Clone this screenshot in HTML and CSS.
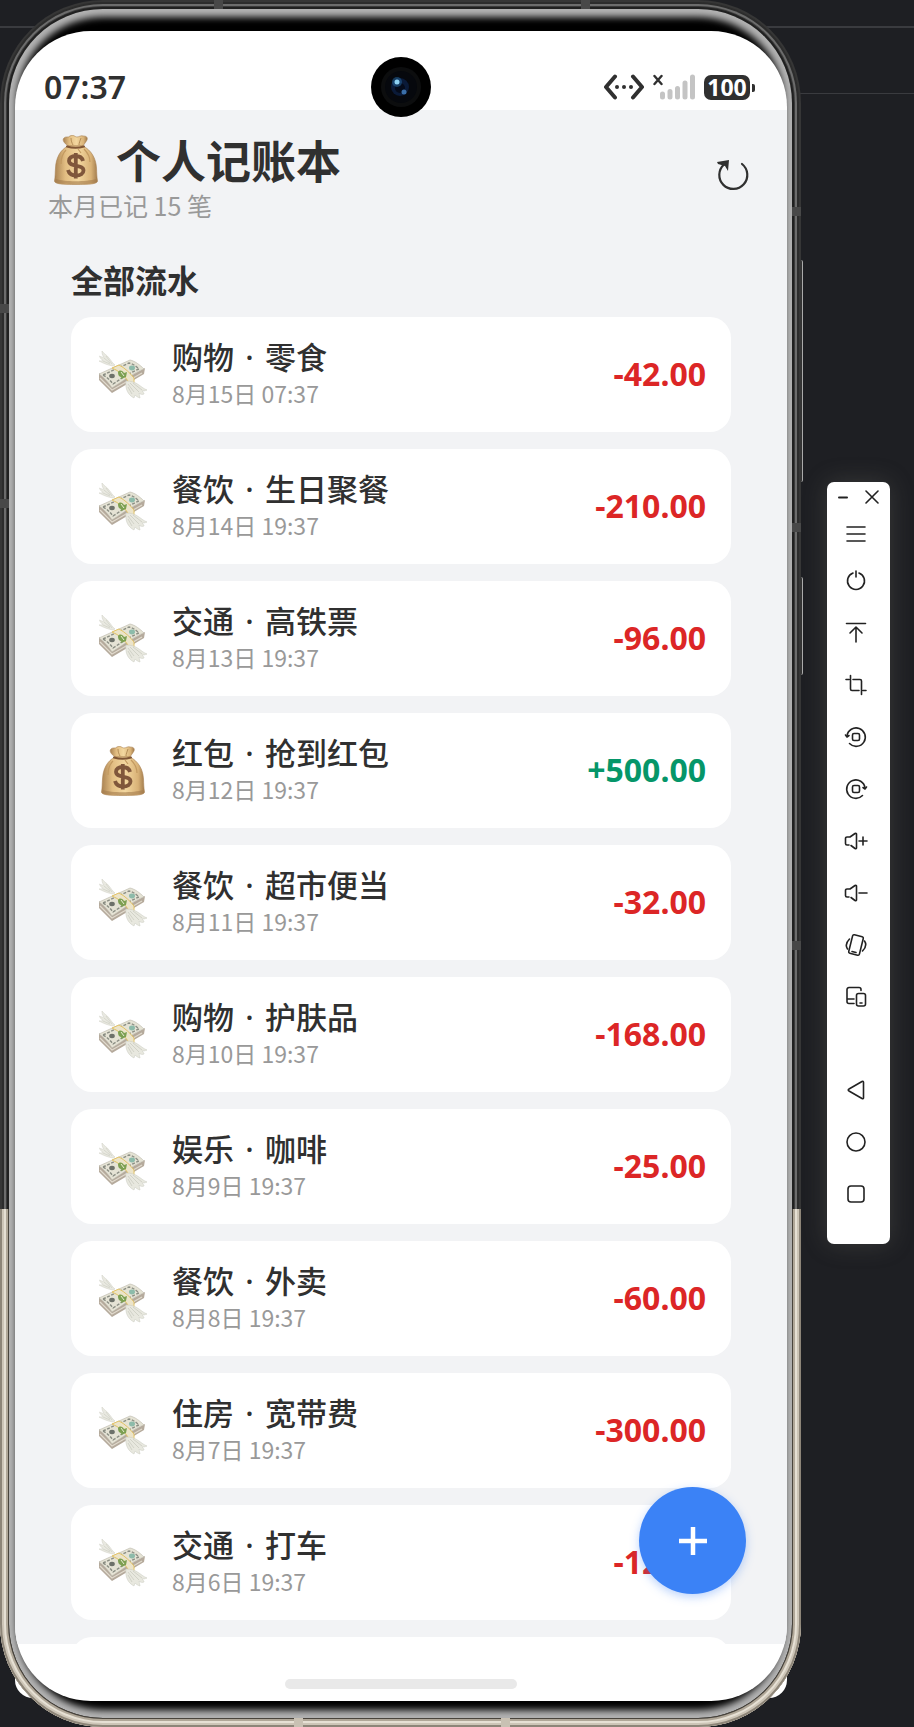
FILE: index.html
```html
<!DOCTYPE html>
<html lang="zh-CN">
<head>
    <meta charset="UTF-8">
    <meta name="viewport" content="width=device-width, initial-scale=1.0">
    <title>个人记账本</title>
    <link rel="stylesheet" href="styles.css">
</head>
<body>
    <svg class="sprite" aria-hidden="true">
        <defs>
            <linearGradient id="bagFill" x1="0" x2="1" y1="0" y2="0">
                <stop offset="0" stop-color="#a98252"/>
                <stop offset="0.25" stop-color="#e2bd82"/>
                <stop offset="0.55" stop-color="#f3d79f"/>
                <stop offset="0.85" stop-color="#d9b277"/>
                <stop offset="1" stop-color="#a07a4c"/>
            </linearGradient>
        </defs>
        <symbol id="bag" viewBox="0 0 44 50">
            <path d="M14 11C10 8 8 5 10 3c2-2 4 0 6-2 3-2 5 1 7 1s4-2 6-1c3 0 5 1 4 4-1 2-3 4-4 6z" fill="url(#bagFill)" stroke="#a98252" stroke-width="0.6"/>
            <path d="M17 3c0 3 1 5 2 7M27 3c-1 3-2 5-2 7" fill="none" stroke="#b58e58" stroke-width="1"/>
            <path d="M14 11h15c8 4 13 12 13.500 22 .2 5 .3 9 1 13 0 3-8 3.500-21.500 3.500S.5 49 .5 46c.8-4 .6-8 1-13C2 23 6 15 14 11z" fill="url(#bagFill)" stroke="#a98252" stroke-width="0.6"/>
            <path d="M2 44c8 3 31 3 40 0l1 3c-6 3-36 3-42 0z" fill="#a37c4d" opacity="0.6"/>
            <path d="M13 11.500c5 1.500 12 1.500 17 0" fill="none" stroke="#7f5535" stroke-width="2" stroke-linecap="round"/>
            <path d="M12 15c-4 4-5 8-5 14M24 14l3 4M30 14c4 4 6 8 6 13" fill="none" stroke="#c39a61" stroke-width="1.200"/>
            <path d="M29 26c-1-4-4-5-7.500-5-4 0-6.500 2-6.500 4.800 0 6.700 14.500 3.200 14.500 9.700 0 3-3 5-7.500 5s-7-2-8-5.500M21.800 18v25.500" fill="none" stroke="#80573b" stroke-width="3.800"/>
        </symbol>
        <symbol id="cash" viewBox="0 0 50 50">
            <path d="M15 16C9 15 5 13 1 11c2 0 3 0 4-.5C3 9 2 8 1.500 6 3 7 5 7.500 6 7 4 5 4 3 4 1c2 3 5 4 7 7 2 2 3 5 6 7z" fill="#e9e9e1" stroke="#d3d4ca" stroke-width="0.6"/>
            <path d="M6 8l6 5M5 11l7 3M8 6l6 8" stroke="#c9cbc0" stroke-width="0.6"/>
            <path d="M1 23v7l13 13 32-19 1-6-33 18z" fill="#b5aa9c"/>
            <path d="M1 24L32 10c5 1 10 5 14 9-9 3-18 10-32 19C10 32 6 27 1 24z" fill="#e5e3d5" stroke="#b8b6a8" stroke-width="0.6"/>
            <path d="M5 25L31 13c4 1 7 3 10 6-8 3-17 9-26 15-3-4-6-7-10-9z" fill="none" stroke="#8b8e84" stroke-width="1.400" stroke-dasharray="3 1.500"/>
            <path d="M2 28l12 12 30-17" fill="none" stroke="#e1dbce" stroke-width="1.200"/>
            <ellipse cx="14" cy="26" rx="2.800" ry="2.200" fill="#6d716a"/>
            <ellipse cx="34" cy="18" rx="3" ry="2.400" fill="#8dbbaa"/>
            <path d="M14 18l7-3c6 3 11 8 15 13v5l-6 2v-4c-4-6-9-10-16-13z" fill="#ece4c9" stroke="#e3c366" stroke-width="1"/>
            <path d="M20 22c2-3 5-1 6 1l3-1-1 5-5 2c-1-1 0-2 1-2-3 0-4-2-4-5z" fill="#7da052"/>
            <path d="M23 22l3 4" stroke="#e9ecd2"/>
            <path d="M28 31c5 0 9 1 13 4 3 2 5 4 8 5-2 1-4 1-5 1 1 1 2 2 2 3-2 1-4 0-5-1 0 2 1 3 1 5-3-1-4-2-5-3l-1 3c-6-3-9-9-8-17z" fill="#e8e8df" stroke="#cfd0c6" stroke-width="0.6"/>
            <path d="M30 34l6 8M32 33l9 9M35 33l9 7M30 37l4 7" stroke="#c7c8bd" stroke-width="0.700"/>
        </symbol>
    </svg>

    <main class="phone">
        <i class="mark mark-top-a"></i>
        <i class="mark mark-top-b"></i>
        <i class="mark mark-left-a"></i>
        <i class="mark mark-left-b"></i>
        <i class="mark mark-right-a"></i>
        <i class="mark mark-right-b"></i>
        <i class="mark mark-right-c"></i>
        <i class="mark mark-bottom-a"></i>
        <i class="mark mark-bottom-b"></i>
        <i class="side-key key-volume"></i>
        <i class="side-key key-power"></i>
        <div class="bezel">
            <div class="screen">
                <div class="status-bar">
                    <span class="clock">07:37</span>
                    <svg class="camera" viewBox="0 0 60 60">
                        <circle cx="30" cy="30" r="30" fill="#000"/>
                        <circle cx="30" cy="30" r="20" fill="#0c0d0e"/>
                        <circle cx="30" cy="30" r="16" fill="#06080d"/>
                        <circle cx="29" cy="30" r="9" fill="#0a1a38"/>
                        <circle cx="29" cy="31" r="5" fill="#050b1a"/>
                        <circle cx="26" cy="25" r="5" fill="#225c8f" opacity="0.6"/>
                        <circle cx="26" cy="25" r="2.500" fill="#8ed2f2"/>
                        <circle cx="33" cy="35" r="2.500" fill="#3a6ea8"/>
                    </svg>
                    <div class="status-icons">
                        <svg width="40" height="26" viewBox="0 0 40 26">
                            <path d="M11 2.500L2 13l9 10.500M29 2.500L38 13l-9 10.500" fill="none" stroke="#303030" stroke-width="4" stroke-linecap="round" stroke-linejoin="round"/>
                            <circle cx="13" cy="13" r="2" fill="#303030"/>
                            <circle cx="20" cy="13" r="2" fill="#303030"/>
                            <circle cx="27" cy="13" r="2" fill="#303030"/>
                        </svg>
                        <svg class="signal" width="42" height="26" viewBox="0 0 42 26">
                            <path d="M1.500 2l7 8M8.500 2l-7 8" stroke="#303030" stroke-width="2.400" stroke-linecap="round"/>
                            <path d="M9.500 20v3M17 17.500V23M24.500 14.500V23M32 9v14M39.500 3v20" stroke="#c4c4c4" stroke-width="5" stroke-linecap="round"/>
                        </svg>
                        <span class="battery">100</span>
                    </div>
                </div>

                <div class="app">
                    <header class="app-header">
                        <div>
                            <h1><svg class="bag-icon"><use href="#bag"/></svg>个人记账本</h1>
                            <p class="summary">本月已记 15 笔</p>
                        </div>
                        <button class="refresh" type="button" aria-label="刷新">
                            <svg width="32" height="32" viewBox="0 0 32 32">
                                <path d="M25 5a14 14 0 1 1-18 .500" fill="none" stroke="#303030" stroke-width="2.200" stroke-linecap="round"/>
                                <path d="M0 3l12-2-1 11-3-5-7-2z" fill="#303030"/>
                            </svg>
                        </button>
                    </header>

                    <section class="records">
                        <h2>全部流水</h2>
                        <ul>
                            <li class="record">
                                <svg class="record-icon"><use href="#cash"/></svg>
                                <div class="record-text"><h3>购物<span class="dot">·</span>零食</h3><p>8月15日 07:37</p></div>
                                <strong class="amount">-42.00</strong>
                            </li>
                            <li class="record">
                                <svg class="record-icon"><use href="#cash"/></svg>
                                <div class="record-text"><h3>餐饮<span class="dot">·</span>生日聚餐</h3><p>8月14日 19:37</p></div>
                                <strong class="amount">-210.00</strong>
                            </li>
                            <li class="record">
                                <svg class="record-icon"><use href="#cash"/></svg>
                                <div class="record-text"><h3>交通<span class="dot">·</span>高铁票</h3><p>8月13日 19:37</p></div>
                                <strong class="amount">-96.00</strong>
                            </li>
                            <li class="record">
                                <svg class="record-icon"><use href="#bag"/></svg>
                                <div class="record-text"><h3>红包<span class="dot">·</span>抢到红包</h3><p>8月12日 19:37</p></div>
                                <strong class="amount income">+500.00</strong>
                            </li>
                            <li class="record">
                                <svg class="record-icon"><use href="#cash"/></svg>
                                <div class="record-text"><h3>餐饮<span class="dot">·</span>超市便当</h3><p>8月11日 19:37</p></div>
                                <strong class="amount">-32.00</strong>
                            </li>
                            <li class="record">
                                <svg class="record-icon"><use href="#cash"/></svg>
                                <div class="record-text"><h3>购物<span class="dot">·</span>护肤品</h3><p>8月10日 19:37</p></div>
                                <strong class="amount">-168.00</strong>
                            </li>
                            <li class="record">
                                <svg class="record-icon"><use href="#cash"/></svg>
                                <div class="record-text"><h3>娱乐<span class="dot">·</span>咖啡</h3><p>8月9日 19:37</p></div>
                                <strong class="amount">-25.00</strong>
                            </li>
                            <li class="record">
                                <svg class="record-icon"><use href="#cash"/></svg>
                                <div class="record-text"><h3>餐饮<span class="dot">·</span>外卖</h3><p>8月8日 19:37</p></div>
                                <strong class="amount">-60.00</strong>
                            </li>
                            <li class="record">
                                <svg class="record-icon"><use href="#cash"/></svg>
                                <div class="record-text"><h3>住房<span class="dot">·</span>宽带费</h3><p>8月7日 19:37</p></div>
                                <strong class="amount">-300.00</strong>
                            </li>
                            <li class="record">
                                <svg class="record-icon"><use href="#cash"/></svg>
                                <div class="record-text"><h3>交通<span class="dot">·</span>打车</h3><p>8月6日 19:37</p></div>
                                <strong class="amount">-12.00</strong>
                            </li>
                            <li class="record"></li>
                        </ul>
                    </section>

                    <button class="fab" type="button" aria-label="记一笔">
                        <svg width="28" height="28" viewBox="0 0 28 28"><path d="M14 0v28M0 14h28" stroke="#fff" stroke-width="4.500"/></svg>
                    </button>
                </div>

                <div class="nav-bar"><i class="nav-pill"></i></div>
            </div>
        </div>
    </main>

    <aside class="toolbar">
        <div class="window-controls">
            <button type="button" aria-label="最小化"><svg width="14" height="14" viewBox="0 0 14 14"><path d="M3 7.500h8" stroke-width="2"/></svg></button>
            <button type="button" aria-label="关闭"><svg width="14" height="14" viewBox="0 0 14 14"><path d="M1 1l12 12M13 1L1 13"/></svg></button>
        </div>
        <button class="menu" type="button" aria-label="菜单"><svg viewBox="0 0 24 24"><path d="M3 5h18M3 12h18M3 19h18"/></svg></button>
        <button type="button" aria-label="电源"><svg viewBox="0 0 24 24"><path d="M9 4a8.500 8.500 0 1 0 6 0M12 2v6"/></svg></button>
        <button type="button" aria-label="上滑"><svg viewBox="0 0 24 24"><path d="M2.500 2.500h19M12 21V6M6 12l6-6 6 6"/></svg></button>
        <button type="button" aria-label="截图"><svg viewBox="0 0 24 24"><path d="M2 6.500h3M9 6.500h7a1.500 1.500 0 0 1 1.500 1.500v13.500M6.500 2.500V16A1.500 1.500 0 0 0 8 17.500h7M19 17.500h3"/></svg></button>
        <button type="button" aria-label="向左旋转"><svg viewBox="0 0 24 24"><path d="M3 11a9.200 9.200 0 1 1 2.500 7.500"/><path d="M1.500 10l1.500 2 2-1.500"/><rect x="8.500" y="8.500" width="7" height="7" rx="1.500"/></svg></button>
        <button type="button" aria-label="向右旋转"><svg viewBox="0 0 24 24"><path d="M21 11a9.200 9.200 0 1 0-2.500 7.500"/><path d="M22.500 10L21 12l-2-1.500"/><rect x="8.500" y="8.500" width="7" height="7" rx="1.500"/></svg></button>
        <button type="button" aria-label="音量加"><svg viewBox="0 0 24 24"><path d="M5 16H3a1.500 1.500 0 0 1-1.500-1.500v-5A1.500 1.500 0 0 1 3 8h3l5-3.500c1-.5 1.500 0 1.500.500v14c0 .500-.500 1-1.500.500l-4-3M15 12h8M19 8v8"/></svg></button>
        <button type="button" aria-label="音量减"><svg viewBox="0 0 24 24"><path d="M5 16H3a1.500 1.500 0 0 1-1.500-1.500v-5A1.500 1.500 0 0 1 3 8h3l5-3.500c1-.5 1.500 0 1.500.500v14c0 .500-.500 1-1.500.500l-4-3M15 12h8"/></svg></button>
        <button type="button" aria-label="摇一摇"><svg viewBox="0 0 24 24"><rect x="6.500" y="2.500" width="11" height="19" rx="1.500" transform="rotate(14 12 12)"/><path d="M8 18.500l4 1M5.500 6c-3 3-4 7-2 10M18.500 18c3-3 4-7 2-10"/></svg></button>
        <button type="button" aria-label="多设备"><svg viewBox="0 0 24 24"><path d="M17 5.500V4.500A2 2 0 0 0 15 2.500H5a2 2 0 0 0-2 2V16.500a2 2 0 0 0 2 2h5M3 14h7"/><rect x="12.500" y="8.500" width="9" height="12.500" rx="2"/><path d="M16 18h2"/></svg></button>
        <button class="back" type="button" aria-label="返回"><svg viewBox="0 0 24 24"><path d="M5 11L18 3.500c1-.500 1.500 0 1.500.800v15.400c0 .800-.500 1.300-1.500.800L5 13c-1-.500-1-1.500 0-2z"/></svg></button>
        <button type="button" aria-label="主页"><svg viewBox="0 0 24 24"><circle cx="12" cy="12" r="9"/></svg></button>
        <button type="button" aria-label="多任务"><svg viewBox="0 0 24 24"><rect x="4" y="4" width="16" height="16" rx="3"/></svg></button>
    </aside>
</body>
</html>
```
FILE: styles.css
```css
* {
    box-sizing: border-box;
    margin: 0;
    padding: 0;
}

body {
    display: flex;
    align-items: flex-start;
    height: 100vh;
    overflow: hidden;
    font-family: "Noto Sans CJK SC", sans-serif;
    color: #303030;
    background:
        linear-gradient(#3a3b3f, #3a3b3f) 0 26px / 100% 2px no-repeat,
        linear-gradient(#3a3b3f, #3a3b3f) 100% 93px / 160px 1px no-repeat,
        #1e1f23;
}

button {
    display: flex;
    align-items: center;
    justify-content: center;
    border: none;
    background: none;
    cursor: pointer;
}

.sprite {
    position: absolute;
    width: 0;
    height: 0;
}

/* phone shell */
.phone {
    position: relative;
    z-index: 0;
    flex: 1;
    height: 100%;
    margin-right: 26px;
    padding: 9px;
}

.phone::before {
    content: "";
    position: absolute;
    z-index: -2;
    inset: 1600px 14px 29px 15px;
    border-radius: 18px;
    background: #fff;
}

.bezel {
    position: relative;
    height: 100%;
    padding: 22px 5px 17px 6px;
    border-radius: 94px;
    background: #000;
    box-shadow:
        inset 0 0 7px 8px #b4b4b4,
        0 0 0 2px #202020,
        0 0 0 3px #3a3a3a,
        0 0 0 5px #6c6c6c,
        0 0 0 7px #2c2c2c,
        0 0 0 9px #363636;
}

/* lower part of the rim is champagne metal */
.phone::after {
    content: "";
    position: absolute;
    inset: 0;
    border-radius: 103px;
    clip-path: inset(70% 0 0 0);
    box-shadow:
        inset 0 0 0 2px #8d8578,
        inset 0 0 0 4px #cdc5b7,
        inset 0 0 0 6px #e6e0d4,
        inset 0 0 0 8px #b0a798,
        inset 0 0 0 9px #4a453d;
    pointer-events: none;
}

.mark {
    position: absolute;
    z-index: 1;
    width: 9px;
    height: 9px;
    background: #484848;
}

.mark-top-a { top: 0; left: 214px; }
.mark-top-b { top: 0; right: 211px; }
.mark-left-a { top: 304px; left: 0; }
.mark-left-b { top: 499px; left: 0; }
.mark-right-a { top: 207px; right: 0; }
.mark-right-b { top: 523px; right: 0; }
.mark-right-c { top: 941px; right: 0; }
.mark-bottom-a { z-index: 3; bottom: 0; left: 294px; background: #c9c1b3; }
.mark-bottom-b { z-index: 3; bottom: 0; right: 291px; background: #c9c1b3; }

.side-key {
    position: absolute;
    right: -2px;
    width: 3px;
    border-right: 1px solid #aaa;
    border-radius: 0 2px 2px 0;
    background: #333;
}

.key-volume { top: 260px; height: 222px; }
.key-power { top: 577px; height: 98px; }

.screen {
    display: flex;
    flex-direction: column;
    height: 100%;
    overflow: hidden;
    border-radius: 76px;
    background: #fff;
}

/* status bar */
.status-bar {
    position: relative;
    display: flex;
    align-items: flex-end;
    justify-content: space-between;
    height: 79px;
    padding: 0 32px 7px 29px;
    font-family: "Noto Sans", sans-serif;
}

.clock {
    font-size: 32px;
    font-weight: 600;
    line-height: 32px;
}

.camera {
    position: absolute;
    z-index: 1;
    top: 26px;
    left: 50%;
    width: 60px;
    height: 60px;
    margin-left: -30px;
}

.status-icons {
    display: flex;
    align-items: center;
    gap: 9px;
    height: 32px;
}

.battery {
    position: relative;
    width: 46px;
    margin-right: 5px;
    border-radius: 7px;
    background: #303030;
    color: #fff;
    font-size: 23px;
    font-weight: 700;
    line-height: 25px;
    text-align: center;
}

.battery::after {
    content: "";
    position: absolute;
    top: 9px;
    right: -5px;
    width: 3px;
    height: 8px;
    border-radius: 0 2px 2px 0;
    background: #303030;
}

/* app */
.app {
    position: relative;
    flex: 1;
    min-height: 0;
    overflow: hidden;
    background: #f2f3f5;
}

.app-header {
    display: flex;
    align-items: center;
    justify-content: space-between;
    padding: 20px 38px 0 33px;
}

h1 {
    display: flex;
    align-items: center;
    gap: 18px;
    padding-left: 6px;
    font-size: 45px;
    font-weight: 700;
    line-height: 60px;
}

.bag-icon {
    width: 44px;
    height: 50px;
}

.summary {
    color: #999;
    font-size: 25px;
    line-height: 30px;
}

.refresh {
    width: 32px;
    height: 32px;
}

.records {
    padding: 37px 56px 0;
}

h2 {
    margin-bottom: 16px;
    font-size: 32px;
    line-height: 44px;
}

ul {
    display: flex;
    flex-direction: column;
    gap: 17px;
    list-style: none;
}

.record {
    display: flex;
    align-items: center;
    gap: 24px;
    min-height: 115px;
    padding: 0 25px 0 27px;
    border-radius: 21px;
    background: #fff;
}

.record-icon {
    width: 50px;
    height: 50px;
}

.record-text {
    flex: 1;
    padding-bottom: 4px;
}

h3 {
    font-size: 31px;
    font-weight: 500;
    line-height: 40px;
}

.dot {
    display: inline-block;
    width: 31px;
    font-family: "Noto Sans", sans-serif;
    text-align: center;
}

.record-text p {
    color: #999;
    font-size: 23px;
    line-height: 32px;
}

.amount {
    padding-bottom: 2px;
    color: #dc2626;
    font-family: "Noto Sans", sans-serif;
    font-size: 32px;
    font-weight: 700;
}

.income {
    color: #059669;
}

.fab {
    position: absolute;
    right: 41px;
    bottom: 50px;
    width: 107px;
    height: 107px;
    border-radius: 50%;
    background: #3b82f6;
    box-shadow: 0 3px 10px rgba(59, 130, 246, 0.35);
}

.nav-bar {
    display: flex;
    justify-content: center;
    height: 57px;
    padding-top: 35px;
}

.nav-pill {
    width: 30%;
    height: 10px;
    border-radius: 5px;
    background: #e9e9e9;
}

/* emulator toolbar */
.toolbar {
    display: flex;
    flex-direction: column;
    width: 63px;
    margin: 482px 24px 0 0;
    padding-bottom: 24px;
    border-radius: 7px;
    background: #fff;
    box-shadow: 0 0 24px rgba(120, 120, 110, 0.3);
}

.toolbar button {
    height: 52px;
    padding-right: 5px;
}

.toolbar svg {
    width: 24px;
    height: 24px;
    fill: none;
    stroke: #222;
    stroke-width: 1.6;
    stroke-linecap: round;
    stroke-linejoin: round;
}

.toolbar .menu {
    height: 43px;
}

.toolbar .back {
    margin-top: 41px;
}

.window-controls {
    display: flex;
    justify-content: center;
    gap: 15px;
    padding-right: 2px;
}

.window-controls button {
    height: 30px;
    padding: 0;
}

.window-controls svg {
    width: 14px;
    height: 14px;
}
```
